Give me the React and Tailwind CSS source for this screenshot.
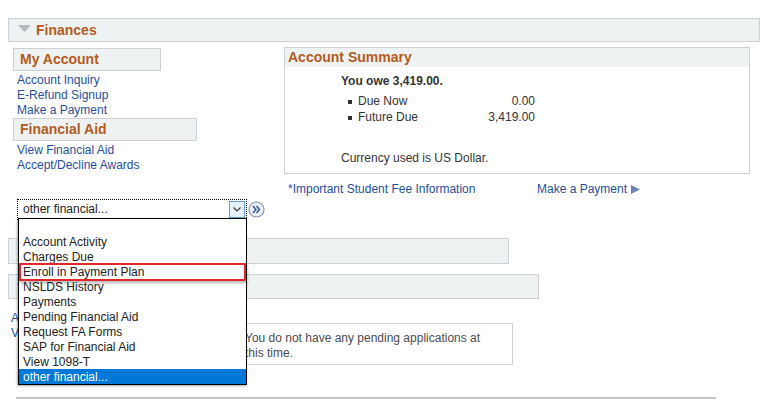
import { useState } from 'react'

const enlaces1 = ['Account Inquiry', 'E-Refund Signup', 'Make a Payment']
const enlaces2 = ['View Financial Aid', 'Accept/Decline Awards']

const opciones = [
  '',
  'Account Activity',
  'Charges Due',
  'Enroll in Payment Plan',
  'NSLDS History',
  'Payments',
  'Pending Financial Aid',
  'Request FA Forms',
  'SAP for Financial Aid',
  'View 1098-T',
  'other financial...',
]

function Cabecera({ texto, ancho }) {
  return (
    <div className={`${ancho} h-[23px] border border-[#cdd1d5] bg-[#eff2f3] flex items-center pl-[6px]`}>
      <span className="text-[14px] font-bold text-[#b45b1c]">{texto}</span>
    </div>
  )
}

export default function App() {
  const [seleccion] = useState('other financial...')

  return (
    <div className="relative w-[774px] h-[420px] bg-white text-[12px] leading-[15px] text-[#333] overflow-hidden" style={{ fontFamily: '"Liberation Sans", Arial, sans-serif' }}>
      {/* Cabecera Finances */}
      <div className="pt-[18px] pl-[8px]">
        <div className="w-[752px] h-[24px] border border-[#cdd1d5] bg-[#eff2f3] flex items-center">
          <svg width="13" height="8" viewBox="0 0 13 8" className="ml-[9px] mr-[5px] mb-[3px]">
            <polygon points="0,0 13,0 6.5,7" fill="#b7babd" />
          </svg>
          <span className="text-[14px] font-bold text-[#b45b1c]">Finances</span>
        </div>
      </div>

      <div className="flex">
        {/* Columna izquierda */}
        <div className="w-[284px] pl-[13px] pt-[6px]">
          <Cabecera texto="My Account" ancho="w-[148px]" />
          <div className="pl-[4px] pt-[2px] text-[#1f4e9e]">
            {enlaces1.map((e) => (
              <div key={e} className="h-[15px]">{e}</div>
            ))}
          </div>
          <Cabecera texto="Financial Aid" ancho="w-[184px]" />
          <div className="pl-[4px] pt-[2px] text-[#1f4e9e]">
            {enlaces2.map((e) => (
              <div key={e} className="h-[15px]">{e}</div>
            ))}
          </div>
        </div>

        {/* Columna derecha */}
        <div className="pt-[5px]">
          <div className="w-[466px] h-[127px] border border-[#cdd1d5]">
            <div className="h-[19px] bg-[#eff2f3] flex items-center pl-[3px]">
              <span className="text-[14px] font-bold text-[#b45b1c]">Account Summary</span>
            </div>
            <div className="pl-[56px] pt-[7px] text-[#333]">
              <div className="font-bold">You owe 3,419.00.</div>
              <div className="mt-[4px] w-[194px]">
                <div className="flex items-center h-[16px]">
                  <span className="w-[4px] h-[4px] bg-[#333] ml-[7px] mr-[6px] mt-[2px]"></span>
                  <span className="flex-1">Due Now</span>
                  <span className="mt-[1px]">0.00</span>
                </div>
                <div className="flex items-center h-[16px]">
                  <span className="w-[4px] h-[4px] bg-[#333] ml-[7px] mr-[6px] mt-[2px]"></span>
                  <span className="flex-1">Future Due</span>
                  <span className="mt-[1px]">3,419.00</span>
                </div>
              </div>
              <div className="mt-[26px]">Currency used is US Dollar.</div>
            </div>
          </div>
          <div className="flex mt-[8px] pl-[4px] text-[#1f4e9e]">
            <span className="w-[249px]">*Important Student Fee Information</span>
            <span className="flex items-center">
              Make a Payment
              <svg width="9" height="9" viewBox="0 0 9 9" className="ml-[4px]">
                <polygon points="0,0 9,4.5 0,9" fill="#6d86b4" />
              </svg>
            </span>
          </div>
        </div>
      </div>

      {/* Selector */}
      <div className="flex items-center pl-[17px] mt-[2px]">
        <div className="w-[230px] h-[21px] border border-dotted border-black p-[1px] flex">
          <div className="flex-1 flex items-center pl-[4px] bg-white text-[#222]">{seleccion}</div>
          <div className="w-[16px] border border-[#5b9bd5] bg-[#e5f1fb] flex items-center justify-center">
            <svg width="8" height="5" viewBox="0 0 8 5">
              <polyline points="0.5,0.5 4,4 7.5,0.5" fill="none" stroke="#333" strokeWidth="1.1" />
            </svg>
          </div>
        </div>
        <svg width="17" height="17" viewBox="0 0 17 17" className="ml-[1px]">
          <circle cx="8.5" cy="8.5" r="7.5" fill="#eef1f7" stroke="#8a96b2" strokeWidth="1.2" />
          <polyline points="5,5 8,8.5 5,12" fill="none" stroke="#2f4f9a" strokeWidth="1.4" />
          <polyline points="8.5,5 11.5,8.5 8.5,12" fill="none" stroke="#2f4f9a" strokeWidth="1.4" />
        </svg>
      </div>

      {/* Contenido detrás de la lista */}
      <div className="pl-[8px] mt-[18px]">
        <div className="w-[501px] h-[26px] border border-[#cdd1d5] bg-[#eff2f3]"></div>
        <div className="w-[531px] h-[25px] border border-[#cdd1d5] bg-[#eff2f3] mt-[10px] flex items-start pl-[8px] pt-[9px]">
          <svg width="7" height="4" viewBox="0 0 7 4">
            <polygon points="0,0 7,0 3.5,4" fill="#555" />
          </svg>
        </div>
        <div className="flex items-start mt-[10px]">
          <div className="w-[232px] pl-[3px] pt-[2px] text-[#1f4e9e]">
            <div className="h-[15px]">A</div>
            <div className="h-[15px]">V</div>
          </div>
          <div className="w-[273px] h-[42px] mt-[14px] border border-[#cdd1d5] pl-[4px] pt-[7px] text-[#4b4a55]">
            <div className="w-[250px]">You do not have any pending applications at this time.</div>
          </div>
        </div>
      </div>

      <div className="ml-[16px] mt-[32px] w-[700px] h-[2px] bg-[#c4c4c4]"></div>

      {/* Lista desplegada */}
      <div className="absolute left-[18px] top-[218px] w-[229px] border border-black bg-white shadow-[-1px_1px_2px_rgba(0,0,0,0.35)]">
        {opciones.map((o, i) => (
          <div
            key={i}
            className={`h-[15px] pl-[4px] pt-[1px] flex items-center ${o === seleccion ? 'bg-[#0078d7] text-white' : 'text-[#222]'}`}
          >
            {o}
          </div>
        ))}
      </div>
      <div className="absolute left-[19px] top-[263px] w-[227px] h-[18px] border-2 border-[#e3262b] shadow-[1px_2px_3px_rgba(0,0,0,0.3)]"></div>
    </div>
  )
}
